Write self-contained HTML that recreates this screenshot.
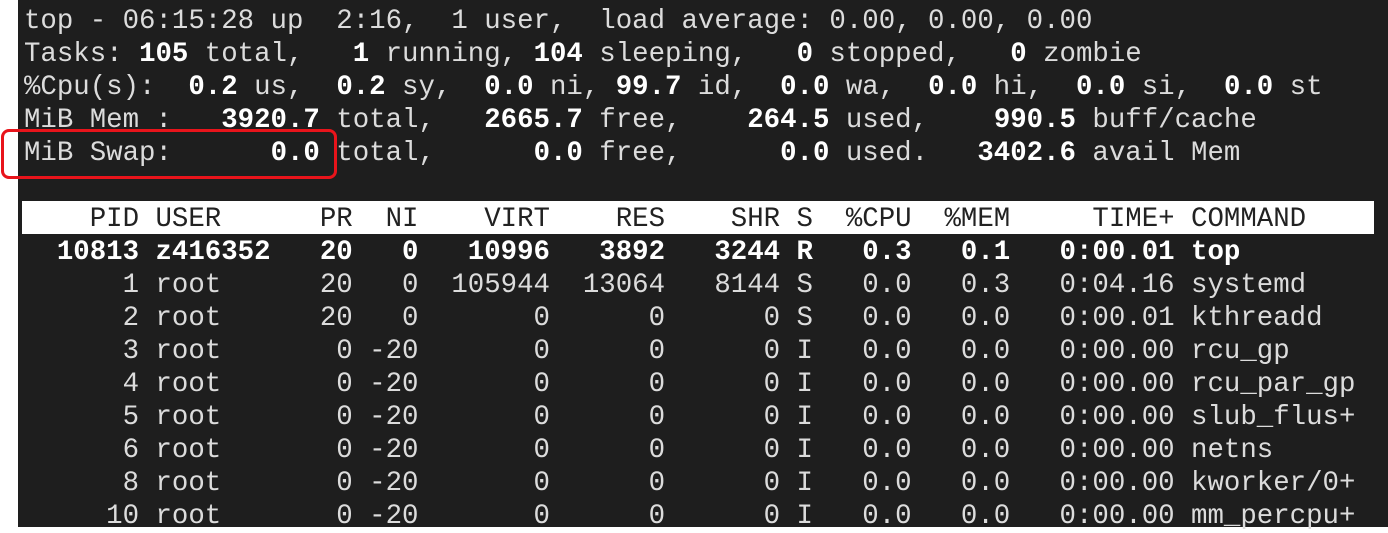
<!DOCTYPE html>
<html><head><meta charset="utf-8"><style>
html,body{margin:0;padding:0;width:1388px;height:527px;overflow:hidden;background:#fff}
#term{position:absolute;left:18px;top:0;width:1370px;height:527px;background:#1e1e1e}
pre{position:absolute;left:24px;top:5px;margin:0;font-family:"Liberation Mono",monospace;font-size:27.4px;line-height:33px;color:#dcdcdc;white-space:pre}
b{color:#fff}
#hdr{position:absolute;left:22px;top:201px;width:1352px;height:33px;background:#fff}
.hd{color:#222}
#box{position:absolute;left:1px;top:129px;width:330px;height:44px;border:3px solid #e8141b;border-radius:8px}
</style></head><body>
<div id="term"></div>
<div id="hdr"></div>
<div id="box"></div>
<pre>top - 06:15:28 up  2:16,  1 user,  load average: 0.00, 0.00, 0.00
Tasks: <b>105</b> total,   <b>1</b> running, <b>104</b> sleeping,   <b>0</b> stopped,   <b>0</b> zombie
%Cpu(s):  <b>0.2</b> us,  <b>0.2</b> sy,  <b>0.0</b> ni, <b>99.7</b> id,  <b>0.0</b> wa,  <b>0.0</b> hi,  <b>0.0</b> si,  <b>0.0</b> st
MiB Mem :   <b>3920.7</b> total,   <b>2665.7</b> free,    <b>264.5</b> used,    <b>990.5</b> buff/cache
MiB Swap:      <b>0.0</b> total,      <b>0.0</b> free,      <b>0.0</b> used.   <b>3402.6</b> avail Mem

<span class="hd">    PID USER      PR  NI    VIRT    RES    SHR S  %CPU  %MEM     TIME+ COMMAND</span>
<b>  10813 z416352   20   0   10996   3892   3244 R   0.3   0.1   0:00.01 top</b>
      1 root      20   0  105944  13064   8144 S   0.0   0.3   0:04.16 systemd
      2 root      20   0       0      0      0 S   0.0   0.0   0:00.01 kthreadd
      3 root       0 -20       0      0      0 I   0.0   0.0   0:00.00 rcu_gp
      4 root       0 -20       0      0      0 I   0.0   0.0   0:00.00 rcu_par_gp
      5 root       0 -20       0      0      0 I   0.0   0.0   0:00.00 slub_flus+
      6 root       0 -20       0      0      0 I   0.0   0.0   0:00.00 netns
      8 root       0 -20       0      0      0 I   0.0   0.0   0:00.00 kworker/0+
     10 root       0 -20       0      0      0 I   0.0   0.0   0:00.00 mm_percpu+</pre>
</body></html>
